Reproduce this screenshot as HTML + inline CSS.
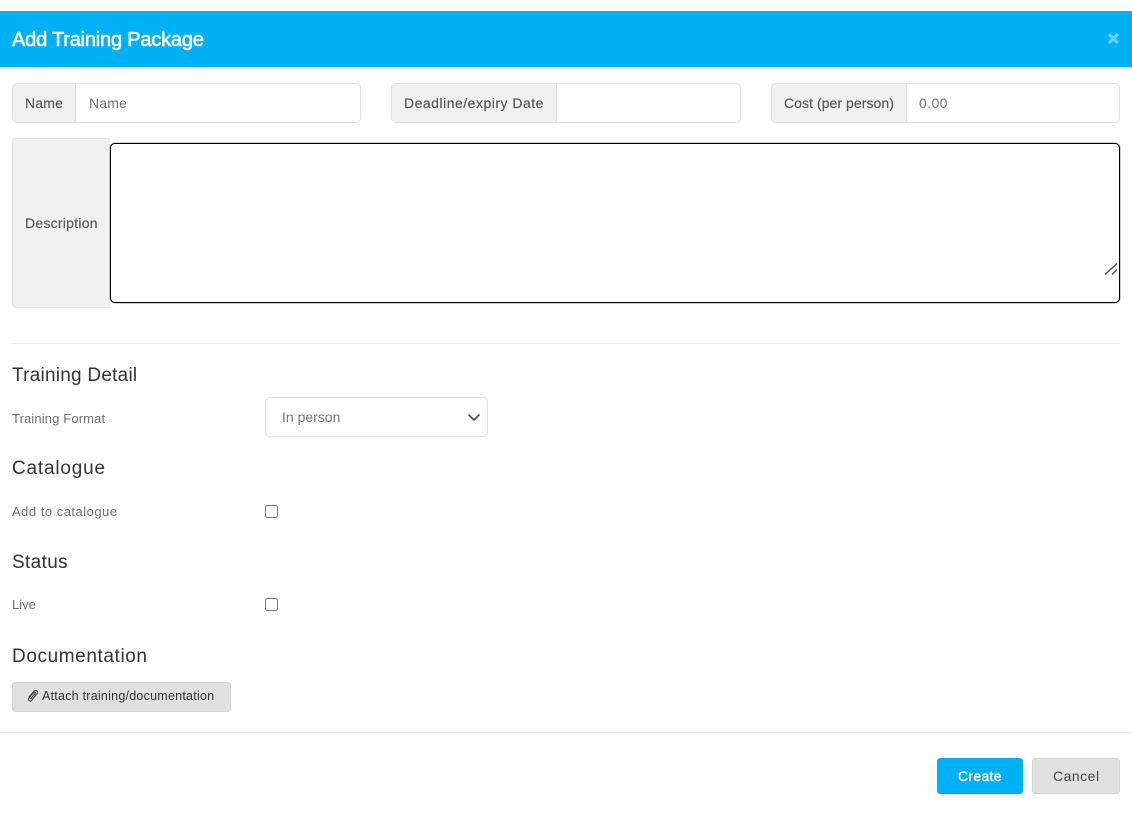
<!DOCTYPE html>
<html><head><meta charset="utf-8"><title>Add Training Package</title>
<style>
html,body{margin:0;padding:0;background:#fff;width:1132px;height:836px;overflow:hidden;font-family:"Liberation Sans",sans-serif}
.a{position:absolute;box-sizing:border-box}
.t{position:absolute;white-space:nowrap;line-height:20px}
.box{position:absolute;box-sizing:border-box;border:1px solid #e2e2e2;border-radius:5px;background:#fff}
.add{position:absolute;box-sizing:border-box;background:#f0f0f0;border-right:1px solid #e2e2e2;left:0;top:0;bottom:0;border-radius:4px 0 0 4px}
.lab{font-size:14px;color:#555;-webkit-text-stroke:.15px #555}
.ph{font-size:14px;color:#707070}
.h{font-size:19px;color:#333}
.s{font-size:13px;color:#6e6e6e}
.cb{position:absolute;box-sizing:border-box;width:13px;height:13px;border:1px solid #767676;border-radius:2.5px;background:#fff;left:265px}
</style></head><body>
<div class="a" style="left:0;top:11px;width:1132px;height:56px;background:#00b0f4"></div>
<div class="t" style="left:12px;top:30px;font-size:20px;color:#fff;-webkit-text-stroke:.6px #fff;letter-spacing:-.2px">Add Training Package</div>
<svg class="a" style="left:1107px;top:32px" width="13" height="13" viewBox="0 0 13 13"><path d="M2 2 L11 11 M11 2 L2 11" stroke="#66d0f8" stroke-width="3.2" fill="none"/></svg>

<div class="box" style="left:12px;top:83px;width:349px;height:40px"><div class="add" style="width:63px"></div></div>
<div class="t lab" style="left:25px;top:93px;letter-spacing:.2px">Name</div>
<div class="t ph" style="left:89px;top:93px;letter-spacing:.2px">Name</div>

<div class="box" style="left:391px;top:83px;width:350px;height:40px"><div class="add" style="width:165px"></div></div>
<div class="t lab" style="left:404px;top:93px;letter-spacing:.5px">Deadline/expiry Date</div>

<div class="box" style="left:771px;top:83px;width:349px;height:40px"><div class="add" style="width:135px"></div></div>
<div class="t lab" style="left:784px;top:93px;letter-spacing:.06px">Cost (per person)</div>
<div class="t ph" style="left:919px;top:93px;letter-spacing:.4px">0.00</div>

<div class="a" style="left:12px;top:138px;width:98px;height:170px;background:#f0f0f0;border:1px solid #e2e2e2;border-right:0;border-radius:4px 0 0 4px"></div>
<div class="t lab" style="left:25px;top:213px;letter-spacing:.25px">Description</div>
<div class="a" style="left:110px;top:143px;width:1010px;height:160px;border:1px solid #000;border-radius:5px;background:#fff;box-shadow:0 0 0 .5px rgba(0,0,0,.35)"></div>
<svg class="a" style="left:1104px;top:263px" width="14" height="12" viewBox="0 0 14 12"><path d="M1 11.5 L13 .5 M8 11.5 L13 6.5" stroke="#555" stroke-width="1.5" fill="none"/></svg>

<div class="a" style="left:12px;top:343px;width:1108px;height:1px;background:#ececec"></div>
<div class="t h" style="left:12px;top:366px;letter-spacing:.24px">Training Detail</div>
<div class="t s" style="left:12px;top:409px;letter-spacing:.13px">Training Format</div>
<div class="box" style="left:265px;top:397px;width:223px;height:40px"></div>
<div class="t" style="left:282px;top:407px;font-size:14px;color:#757575">In person</div>
<svg class="a" style="left:467px;top:413px" width="14" height="9" viewBox="0 0 14 9"><path d="M1.5 1.5 L7 7 L12.5 1.5" stroke="#555" stroke-width="1.8" fill="none"/></svg>

<div class="t h" style="left:12px;top:459px;letter-spacing:.8px">Catalogue</div>
<div class="t s" style="left:12px;top:502px;letter-spacing:.5px">Add to catalogue</div>
<div class="cb" style="top:505px"></div>

<div class="t h" style="left:12px;top:553px;letter-spacing:.35px">Status</div>
<div class="t s" style="left:12px;top:595px">Live</div>
<div class="cb" style="top:598px"></div>

<div class="t h" style="left:12px;top:647px;letter-spacing:.6px">Documentation</div>
<div class="a" style="left:12px;top:682px;width:219px;height:30px;background:#e0e0e0;border:1px solid #d5d5d5;border-radius:3px"></div>
<svg class="a" style="left:27px;top:689px" width="12" height="14" viewBox="0 0 12 14"><path d="M1.8 8.2 L7.2 2 C8.8 .4 11.6 2.4 10.2 4.4 L4.6 11.4 C3.4 13 .4 11.4 1.8 9.2 L6.8 3.4 C7.6 2.6 8.8 3.6 8.2 4.4 L3.6 10.2" stroke="#444" stroke-width="1.1" fill="none"/></svg>
<div class="t" style="left:42px;top:686px;font-size:12.5px;color:#333;letter-spacing:.24px">Attach training/documentation</div>

<div class="a" style="left:0;top:732px;width:1132px;height:1px;background:#e6e6e6"></div>
<div class="a" style="left:937px;top:758px;width:86px;height:36px;background:#00b0f4;border-radius:3px"></div>
<div class="t" style="left:958px;top:766px;font-size:14px;color:#fff;-webkit-text-stroke:.4px #fff;letter-spacing:.3px">Create</div>
<div class="a" style="left:1032px;top:758px;width:88px;height:36px;background:#e0e0e0;border:1px solid #d2d2d2;border-radius:3px"></div>
<div class="t" style="left:1053px;top:766px;font-size:14px;color:#444;letter-spacing:.5px">Cancel</div>
</body></html>
